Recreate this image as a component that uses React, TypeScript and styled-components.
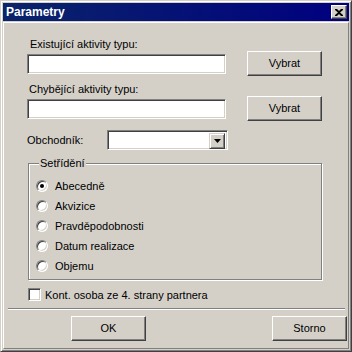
import React from 'react';
import styled, { createGlobalStyle } from 'styled-components';

const GlobalStyle = createGlobalStyle`
  html, body {
    margin: 0;
    padding: 0;
    background: #d4d0c8;
  }
  body {
    font-family: "Liberation Sans", Arial, sans-serif;
    font-size: 11px;
    color: #000;
  }
`;

const Window = styled.div`
  width: 352px;
  height: 352px;
  box-sizing: border-box;
  background: #d4d0c8;
  border: 1px solid;
  border-color: #d4d0c8 #404040 #404040 #d4d0c8;
  box-shadow: inset 1px 1px #fff, inset -1px -1px #808080;
  padding: 2px;
  display: flex;
  flex-direction: column;
`;

const TitleBar = styled.div`
  height: 18px;
  flex: none;
  display: flex;
  align-items: center;
  justify-content: space-between;
  padding: 0 2px 0 3px;
  background: linear-gradient(to right, #0a246a, #000080);
  color: #fff;
  font-weight: bold;
  font-size: 12px;
`;

const CloseButton = styled.div`
  width: 16px;
  height: 14px;
  box-sizing: border-box;
  background: #d4d0c8;
  border: 1px solid;
  border-color: #fff #404040 #404040 #fff;
  box-shadow: inset -1px -1px #808080;
  display: flex;
  align-items: center;
  justify-content: center;
`;

const Client = styled.div`
  flex: 1;
  margin-top: 1px;
  border: 1px solid;
  border-color: #fff #808080 #808080 #fff;
  display: flex;
  flex-direction: column;
`;

const Main = styled.div`
  display: flex;
  flex-direction: column;
  padding-left: 23px;
`;

const Label = styled.div<{ $top: number; $left?: number }>`
  line-height: 13px;
  height: 13px;
  margin-top: ${(p) => p.$top}px;
  margin-left: ${(p) => p.$left ?? 0}px;
  white-space: nowrap;
`;

const Row = styled.div<{ $top?: number }>`
  display: flex;
  align-items: center;
  margin-top: ${(p) => p.$top ?? 0}px;
`;

const sunken = `
  box-sizing: border-box;
  background: #fff;
  border: 1px solid;
  border-color: #808080 #fff #fff #808080;
  box-shadow: inset 1px 1px #404040, inset -1px -1px #d4d0c8;
`;

const TextBox = styled.div<{ $width: number }>`
  ${sunken}
  width: ${(p) => p.$width}px;
  height: 20px;
`;

const Button = styled.div`
  width: 75px;
  height: 25px;
  box-sizing: border-box;
  background: #d4d0c8;
  border: 1px solid;
  border-color: #fff #404040 #404040 #fff;
  box-shadow: inset -1px -1px #808080;
  display: flex;
  align-items: center;
  justify-content: center;
  padding-bottom: 1px;
`;

const Gap = styled.div<{ $w: number }>`
  width: ${(p) => p.$w}px;
  flex: none;
`;

const FieldLabel = styled.div`
  width: 80px;
  flex: none;
`;

const Combo = styled.div`
  ${sunken}
  width: 121px;
  height: 20px;
  display: flex;
  justify-content: flex-end;
  padding: 2px;
`;

const DropButton = styled.div`
  width: 16px;
  height: 16px;
  box-sizing: border-box;
  background: #d4d0c8;
  border: 1px solid;
  border-color: #d4d0c8 #404040 #404040 #d4d0c8;
  box-shadow: inset 1px 1px #fff, inset -1px -1px #808080;
  display: flex;
  align-items: center;
  justify-content: center;
`;

const Group = styled.fieldset`
  margin: 7px 0 0 1px;
  width: 294px;
  box-sizing: border-box;
  border: 1px solid #808080;
  box-shadow: inset 1px 1px #fff, 1px 1px #fff;
  padding: 6px 0 3px 7px;
  min-width: 0;
`;

const Legend = styled.legend`
  margin-left: 3px;
  padding: 0 1px;
  line-height: 13px;
  background: #d4d0c8;
  position: relative;
`;

const Option = styled.div`
  height: 20px;
  display: flex;
  align-items: center;
  gap: 7px;
`;

const Radio = styled.div<{ $checked?: boolean }>`
  ${sunken}
  width: 12px;
  height: 12px;
  border-radius: 50%;
  display: flex;
  align-items: center;
  justify-content: center;
  &::after {
    content: '';
    width: 4px;
    height: 4px;
    border-radius: 50%;
    background: ${(p) => (p.$checked ? '#000' : 'transparent')};
  }
`;

const CheckRow = styled.div`
  display: flex;
  align-items: center;
  gap: 4px;
  margin: 8px 0 0 1px;
`;

const CheckBox = styled.div`
  ${sunken}
  width: 13px;
  height: 13px;
`;

const Separator = styled.div`
  height: 1px;
  margin: 7px 3px 0 4px;
  background: #808080;
  border-bottom: 1px solid #fff;
`;

const Footer = styled.div`
  display: flex;
  justify-content: space-between;
  margin-top: 6px;
  padding: 0 1px 0 67px;
`;

const options = ['Abecedně', 'Akvizice', 'Pravděpodobnosti', 'Datum realizace', 'Objemu'];

export default function App() {
  return (
    <>
      <GlobalStyle />
      <Window>
        <TitleBar>
          <span>Parametry</span>
          <CloseButton>
            <svg width="8" height="7" viewBox="0 0 8 7">
              <path d="M0 0h2l2 2 2-2h2v1L5 3.5 8 6v1H6L4 5 2 7H0V6l3-2.5L0 1z" fill="#000" />
            </svg>
          </CloseButton>
        </TitleBar>
        <Client>
          <Main>
            <Label $top={15} $left={3}>Existující aktivity typu:</Label>
            <Row>
              <TextBox $width={199} />
              <Gap $w={21} />
              <Button>Vybrat</Button>
            </Row>
            <Label $top={7} $left={2}>Chybějící aktivity typu:</Label>
            <Row>
              <TextBox $width={199} />
              <Gap $w={21} />
              <Button>Vybrat</Button>
            </Row>
            <Row $top={9}>
              <FieldLabel>Obchodník:</FieldLabel>
              <Combo>
                <DropButton>
                  <svg width="7" height="4" viewBox="0 0 7 4">
                    <path d="M0 0h7L3.5 4z" fill="#000" />
                  </svg>
                </DropButton>
              </Combo>
            </Row>
            <Group>
              <Legend>Setřídění</Legend>
              {options.map((o, i) => (
                <Option key={o}>
                  <Radio $checked={i === 0} />
                  <span>{o}</span>
                </Option>
              ))}
            </Group>
            <CheckRow>
              <CheckBox />
              <span>Kont. osoba ze 4. strany partnera</span>
            </CheckRow>
          </Main>
          <Separator />
          <Footer>
            <Button>OK</Button>
            <Button>Storno</Button>
          </Footer>
        </Client>
      </Window>
    </>
  );
}
